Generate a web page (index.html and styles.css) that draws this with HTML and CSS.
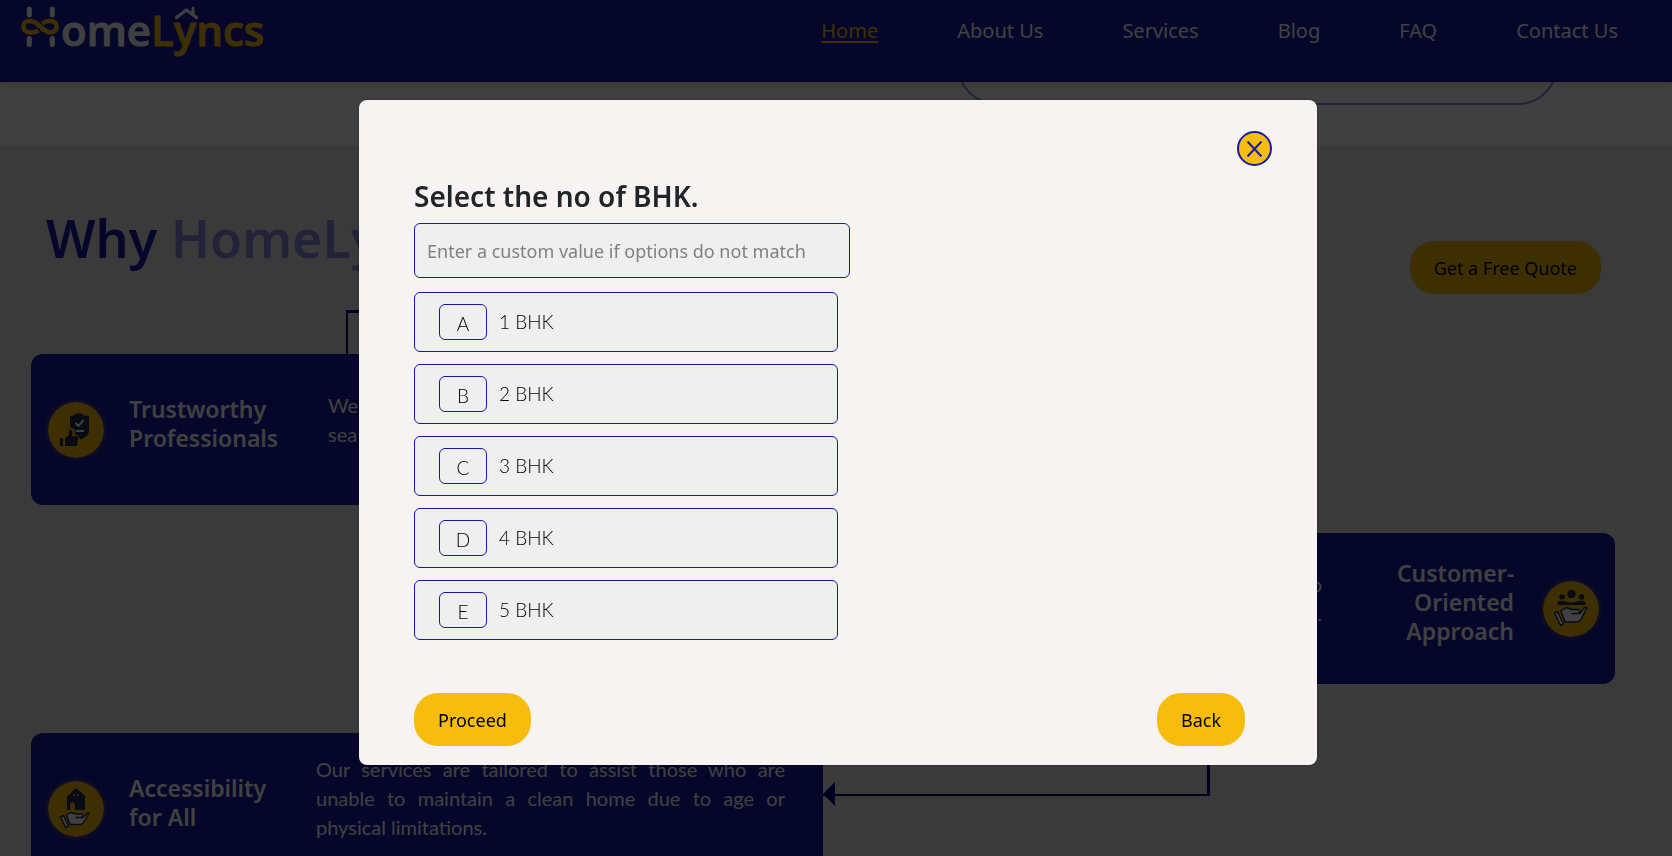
FILE: index.html
```html
<!DOCTYPE html>
<html lang="en">
<head>
<meta charset="utf-8">
<meta name="viewport" content="width=device-width, initial-scale=1">
<title>HomeLyncs</title>
<link rel="stylesheet" href="styles.css">
</head>
<body>
<header class="site-header">
  <a class="logo" href="#" aria-label="HomeLyncs">
    <svg width="260" height="66" viewBox="0 -6 260 66">
      <path d="M9.300 3v6M32.300 3v6M9.300 32.500v6M32.300 32.500v6" fill="none" stroke="#fff" stroke-width="5" stroke-linecap="round"/>
      <path d="M18.500 24.500Q15.500 26.500 10.500 26.500 3.500 26 3.500 20.500 3.500 15 10 15 14 15 18 18.500L22.500 22.500Q26.500 26.500 30.500 26.500 36.500 26 36.500 20.500 36.500 15 30 15 25.500 15 22 17.500" fill="none" stroke="#f6bc0e" stroke-width="4.600"/>
      <text class="logo-text" x="41" y="40" fill="#fff" stroke="#fff">ome</text>
      <text class="logo-text" x="131" y="40" fill="#f6bc0e" stroke="#f6bc0e">Lyncs</text>
      <path d="M156.500 11.500L166.500 4l10 7.500M173 8V2" fill="none" stroke="#fff" stroke-width="3.200" stroke-linecap="round" stroke-linejoin="round"/>
    </svg>
  </a>
  <nav class="nav">
    <a class="active" href="#">Home</a>
    <a href="#">About Us</a>
    <a href="#">Services</a>
    <a href="#">Blog</a>
    <a href="#">FAQ</a>
    <a href="#">Contact Us</a>
  </nav>
</header>

<section class="intro"><div class="intro-box"></div></section>

<section class="why">
  <div class="why-head">
    <h2>Why <span>HomeLyncs</span></h2>
    <button class="pill" type="button">Get a Free Quote</button>
  </div>
  <div class="link-top"></div>
  <article class="card">
    <svg class="badge" viewBox="0 0 56 56">
      <circle cx="28" cy="28" r="28" fill="#f6bc0e"/>
      <path d="M22 14l4-.5 2-2h6l2 2 5 .5v15c0 5-5 7-9 8.500l-2-4-3-1V27l-3-1-2-1z" fill="#232d52"/>
      <path d="M27.500 21l3 3 5-6M28 29h8" fill="none" stroke="#fff" stroke-width="2"/>
      <path d="M12 36h3v8h-3zM17 36l4-3v-5c3-1 4 2 3 6h6v4l-1 6H17z" fill="#232d52"/>
    </svg>
    <h3>Trustworthy<br>Professionals</h3>
    <p class="narrow">We<br>sea</p>
  </article>
  <article class="card card-right">
    <p>to<br>s.</p>
    <h3>Customer-<br>Oriented<br>Approach</h3>
    <svg class="badge" viewBox="0 0 56 56">
      <circle cx="28" cy="28" r="28" fill="#f6bc0e"/>
      <g fill="#232d52">
        <circle cx="28.500" cy="13" r="4.300"/><circle cx="19" cy="16" r="2.800"/><circle cx="38.500" cy="16" r="2.800"/>
        <path d="M14.500 24v-3q3-2 7-1 6 3 14 0 4-1 7 1v3z"/>
      </g>
      <g fill="#fff" stroke="#232d52" stroke-width="1.400" stroke-linejoin="round">
        <path d="M11.500 32l3-1.500 6 12.500-3 1.500z"/>
        <path d="M18 30l5-3.500 6 2h7l1 2.500-2 1.500h-6 8l4.500-6 2.500 0-6 12-3 2.500H22z"/>
      </g>
    </svg>
  </article>
  <div class="row">
    <article class="card card-low">
      <svg class="badge" viewBox="0 0 56 56">
        <circle cx="28" cy="28" r="28" fill="#f6bc0e"/>
        <path d="M28 7l10 8.500-1.500 1.500H37v12H27v-6q-2.500-3-5 0v6h-3V17l-.5-1z" fill="#232d52"/>
        <path d="M26.500 13v2M30 13v2" stroke="#f6bc0e" stroke-width="1.500"/>
        <g fill="#fff" stroke="#232d52" stroke-width="1.400" stroke-linejoin="round">
          <path d="M12.500 36l3-1.500 5 10.500-3 1.500z"/>
          <path d="M18.500 34l4.500-2.500 5 1.500h6l1 2-2 1.500h-5 7l4-4.500 2 0-5 9-3 2.500H22z"/>
        </g>
      </svg>
      <h3>Accessibility<br>for All</h3>
      <p>Our services are tailored to assist those who are unable to maintain a clean home due to age or physical limitations.</p>
    </article>
    <div class="link-side"><svg class="arrow" viewBox="0 0 12 24"><path d="M12 0v24L0 12z" fill="#00008b"/></svg></div>
  </div>
</section>

<div class="overlay">
  <div class="modal" role="dialog" aria-modal="true" aria-labelledby="modal-title">
    <button class="close" type="button" aria-label="Close">
      <svg width="15" height="16" viewBox="0 0 15 16"><path d="M.5.500l14 15M14.500.500l-14 15" fill="none" stroke="#141ba6" stroke-width="2"/></svg>
    </button>
    <label class="title" id="modal-title" for="custom">Select the no of BHK.</label>
    <input class="custom" id="custom" type="text" placeholder="Enter a custom value if options do not match">
    <div class="options">
      <button class="option" type="button"><span class="key">A</span>1 BHK</button>
      <button class="option" type="button"><span class="key">B</span>2 BHK</button>
      <button class="option" type="button"><span class="key">C</span>3 BHK</button>
      <button class="option" type="button"><span class="key">D</span>4 BHK</button>
      <button class="option" type="button"><span class="key">E</span>5 BHK</button>
    </div>
    <div class="actions">
      <button class="pill" type="button">Proceed</button>
      <button class="pill" type="button">Back</button>
    </div>
  </div>
</div>
</body>
</html>
```
FILE: styles.css
```css
* { box-sizing: border-box; }

body {
  margin: 0;
  height: 100vh;
  overflow: hidden;
  background: #fff;
  color: #212529;
  font-family: "Noto Sans", "Open Sans", sans-serif;
  font-size: 18px;
}

h2, h3, p { margin: 0; }
button, input { font: inherit; }

.site-header {
  position: relative;
  display: flex;
  justify-content: space-between;
  align-items: flex-start;
  height: 82px;
  padding: 0 54px 0 20px;
  background: #141ba6;
  box-shadow: 0 2px 6px rgba(0, 0, 0, .15);
}

.logo { display: block; }
.logo svg { display: block; }
.logo-text { font: 600 42px "Open Sans", sans-serif; stroke-width: 1px; stroke-linejoin: round; }

.nav { display: flex; gap: 79px; padding-top: 16px; }
.nav a { color: #fff; font-size: 20px; line-height: 30px; text-decoration: none; }
.nav .active { color: #f6bc0e; text-decoration: underline; text-underline-offset: 3px; }

.intro { display: flex; justify-content: flex-end; height: 64px; padding-right: 114px; }
.intro-box {
  width: 601px;
  height: 80px;
  margin-top: -57px;
  border: 2px solid #888ce0;
  border-radius: 40px;
}

.why { padding: 58px 57px 0 31px; background: #e8e8e8; }
.why-head { display: flex; justify-content: space-between; align-items: flex-start; height: 106px; padding: 0 14px 0 15px; }
.why-head .pill { margin-top: 37px; }
h2 { color: #141ba6; font-size: 52px; font-weight: 600; line-height: 68px; }
h2 span { color: #888ce0; }

.pill {
  padding: 0 24px;
  height: 53px;
  border: 0;
  border-radius: 24px;
  background: #f6bc0e;
  color: #000;
  font-size: 18px;
}

.link-top {
  width: 50%;
  height: 44px;
  margin-left: 315px;
  border: solid #00008b;
  border-width: 3px 0 0 2px;
}

.card {
  display: flex;
  align-items: center;
  width: 50%;
  height: 151px;
  padding: 0 38px 0 17px;
  border-radius: 12px;
  background: #141ba6;
  color: #fff;
}
.badge { flex: none; width: 56px; height: 56px; border-radius: 50%; box-shadow: 0 0 5px rgba(246, 188, 14, .5); }
.card h3 { flex: none; width: 187px; margin-left: 25px; padding-bottom: 12px; font-size: 23px; font-weight: 600; line-height: 29px; }
.card p { flex: 1; padding-bottom: 20px; font: 400 20px/29px Lato, sans-serif; text-align: justify; }
.card .narrow { padding-left: 12px; }
.card-right { margin: 28px 0 0 50%; padding: 0 16px 0 38px; }
.card-right h3 { margin: 0 29px 0 0; width: 192px; text-align: right; }
.card-right p { text-align: right; }

.row { display: flex; align-items: flex-start; }
.card-low { flex: none; margin-top: 49px; }
.link-side {
  position: relative;
  width: 387px;
  height: 112px;
  border: solid #00008b;
  border-width: 0 3px 2px 0;
}
.arrow { position: absolute; left: 0; bottom: -12px; width: 12px; height: 24px; }

.overlay {
  position: fixed;
  inset: 0;
  display: flex;
  justify-content: center;
  align-items: flex-start;
  padding: 100px 0 0 4px;
  background: rgba(0, 0, 0, .75);
}
.modal {
  display: flex;
  flex-direction: column;
  align-items: flex-start;
  width: 958px;
  max-width: 96%;
  padding: 31px 45px 19px 55px;
  border-radius: 8px;
  background: #f7f3f2;
  box-shadow: 0 0 2px rgba(0, 0, 0, .5);
}
.close {
  display: flex;
  align-items: center;
  justify-content: center;
  align-self: flex-end;
  width: 35px;
  height: 35px;
  padding: 0;
  border: 2px solid #141ba6;
  border-radius: 50%;
  background: #f6bc0e;
}
.title { margin: 13px 0 10px; font-size: 28px; font-weight: 600; line-height: 34px; }
.custom {
  width: 436px;
  height: 55px;
  padding: 0 12px;
  border: 1px solid #141ba6;
  border-radius: 6px;
  background: #efefef;
  color: #212529;
}
.custom::placeholder { color: #808080; }
.options { display: grid; gap: 12px; width: 424px; margin-top: 14px; }
.option {
  display: flex;
  align-items: center;
  gap: 12px;
  height: 60px;
  padding: 0 24px;
  border: 1px solid #141ba6;
  border-radius: 6px;
  background: #efefef;
  color: #000;
  font: 300 19px/24px Lato, sans-serif;
}
.key {
  width: 48px;
  height: 36px;
  padding-top: 3px;
  border: 1px solid #141ba6;
  border-radius: 6px;
  line-height: 32px;
  text-align: center;
}
.actions { display: flex; justify-content: space-between; align-self: stretch; margin: 53px 27px 0 0; }
```
